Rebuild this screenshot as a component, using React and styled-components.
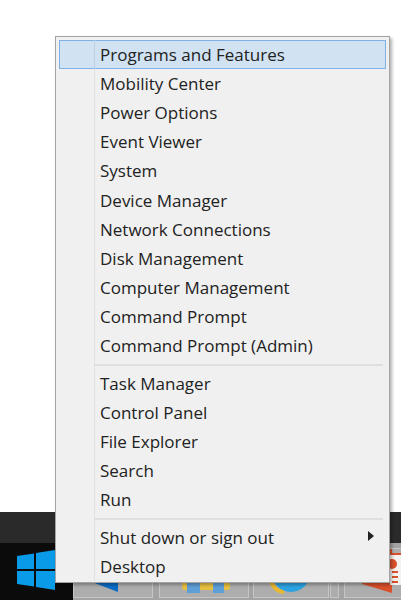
import React from "react";
import styled, { createGlobalStyle } from "styled-components";

const Global = createGlobalStyle`
  html, body { margin: 0; padding: 0; background: #fff; }
  body { width: 401px; height: 600px; overflow: hidden; }
`;

const Screen = styled.div`
  position: relative;
  width: 401px;
  height: 600px;
  display: flex;
  flex-direction: column;
  justify-content: flex-end;
  overflow: hidden;
`;

const Taskbar = styled.div`
  height: 88px;
  display: flex;
  flex-direction: column;
`;

const TopStrip = styled.div`
  height: 31px;
  background: #2a2a2a;
`;

const BottomStrip = styled.div`
  flex: 1;
  display: flex;
`;

const StartButton = styled.div`
  width: 73px;
  flex-shrink: 0;
  display: flex;
  align-items: flex-start;
  padding: 7px 0 0 17px;
  box-sizing: border-box;
  background: #0b0b0b;
`;

const TaskItems = styled.div`
  flex: 1;
  display: flex;
  padding: 5px 0 2px;
  background: #a3a3a3;
`;

const TaskItem = styled.div`
  width: ${(p) => p.$w}px;
  margin-left: ${(p) => p.$gap || 0}px;
  flex-shrink: 0;
  box-sizing: border-box;
  background: #adadad;
  border: 1px solid #c6c6c6;
  overflow: hidden;
`;

const Menu = styled.div`
  position: absolute;
  left: 55px;
  top: 36px;
  width: 335px;
  height: 547px;
  box-sizing: border-box;
  padding: 3px;
  background: #f0f0f0;
  border: 1px solid #a4a4a4;
  box-shadow: 2px 2px 3px rgba(0, 0, 0, 0.3);
  font-family: "Open Sans", "Noto Sans", sans-serif;
`;

const Group = styled.div`
  display: flex;
  flex-direction: column;
`;

const Row = styled.div`
  position: relative;
  height: 29.1px;
  display: flex;
  align-items: center;
  justify-content: space-between;
  box-sizing: border-box;
  padding: 0 12px 0 41px;
  font-size: 17px;
  color: #222;
  white-space: nowrap;
  background: ${(p) => (p.$active ? "#d1e2f2" : "transparent")};
  box-shadow: ${(p) => (p.$active ? "inset 0 0 0 1px #7fb0e6" : "none")};

  &::before {
    content: "";
    position: absolute;
    left: 35px;
    top: 0;
    bottom: 0;
    width: 1px;
    background: ${(p) => (p.$active ? "#bcd0e4" : "#e2e2e2")};
  }
`;

const Divider = styled.div`
  height: ${(p) => p.$h}px;
  display: flex;
  align-items: center;
  padding: 0 3px 0 35px;
  box-sizing: border-box;
  background: linear-gradient(#e2e2e2, #e2e2e2) 35px 0 / 1px 100% no-repeat;

  &::after {
    content: "";
    flex: 1;
    height: 2px;
    background: #dfdfdf;
  }
`;

const Arrow = styled.span`
  width: 0;
  height: 0;
  margin-bottom: 3px;
  border-left: 6px solid #222;
  border-top: 5px solid transparent;
  border-bottom: 5px solid transparent;
`;

const groups = [
  ["Programs and Features", "Mobility Center", "Power Options", "Event Viewer", "System", "Device Manager", "Network Connections", "Disk Management", "Computer Management", "Command Prompt", "Command Prompt (Admin)"],
  ["Task Manager", "Control Panel", "File Explorer", "Search", "Run"],
];

const WinLogo = () => (
  <svg width="38" height="40" viewBox="0 0 38 40" display="block">
    <path d="M0 6 L17 3.5 V19 H0 Z M19 3 L38 0 V19 H19 Z M0 21 H17 V36.5 L0 34 Z M19 21 H38 V40 L19 37 Z" fill="#0a9be8" />
  </svg>
);

const App = () => (
  <Screen>
    <Global />
    <Taskbar>
      <TopStrip />
      <BottomStrip>
        <StartButton>
          <WinLogo />
        </StartButton>
        <TaskItems>
          <TaskItem $w={80}>
            <svg width="78" height="48" display="block">
              <polygon points="18,0 44,0 44,43 18,33" fill="#0a6cc4" />
            </svg>
          </TaskItem>
          <TaskItem $w={90} $gap={6}>
            <svg width="88" height="48" display="block">
              <rect x="22" y="0" width="48" height="41" rx="3" fill="#e8c040" />
              <rect x="27" y="0" width="13" height="44" fill="#5f9fd8" />
              <rect x="53" y="0" width="11" height="44" fill="#5f9fd8" />
            </svg>
          </TaskItem>
          <TaskItem $w={76} $gap={4}>
            <svg width="74" height="48" display="block">
              <path d="M16 26 a14 17 0 0 0 14 17" stroke="#e8b830" strokeWidth="4" fill="none" />
              <circle cx="37" cy="24" r="19" fill="#2ba3e0" />
            </svg>
          </TaskItem>
          <TaskItem $w={9} $gap={1} />
          <TaskItem $w={70} $gap={5}>
            <svg width="68" height="48" display="block">
              <polygon points="17,0 47,0 47,44 17,35" fill="#d9502a" />
              <rect x="45" y="4" width="23" height="32" fill="#f4f1ee" />
              <rect x="45" y="4" width="23" height="2" fill="#d9502a" />
              <ellipse cx="47" cy="15" rx="5" ry="5" fill="#d9502a" />
              <rect x="47" y="22" width="6" height="2" fill="#d9502a" />
              <rect x="47" y="27" width="6" height="2" fill="#d9502a" />
              <rect x="47" y="32" width="6" height="2" fill="#d9502a" />
            </svg>
          </TaskItem>
        </TaskItems>
      </BottomStrip>
    </Taskbar>
    <Menu>
      {groups.map((items, i) => (
        <React.Fragment key={i}>
          <Group>
            {items.map((t, j) => (
              <Row key={t} $active={i === 0 && j === 0}>{t}</Row>
            ))}
          </Group>
          <Divider $h={i === 0 ? 9 : 8} />
        </React.Fragment>
      ))}
      <Group>
        <Row>
          Shut down or sign out
          <Arrow />
        </Row>
        <Row>Desktop</Row>
      </Group>
    </Menu>
  </Screen>
);

export default App;
